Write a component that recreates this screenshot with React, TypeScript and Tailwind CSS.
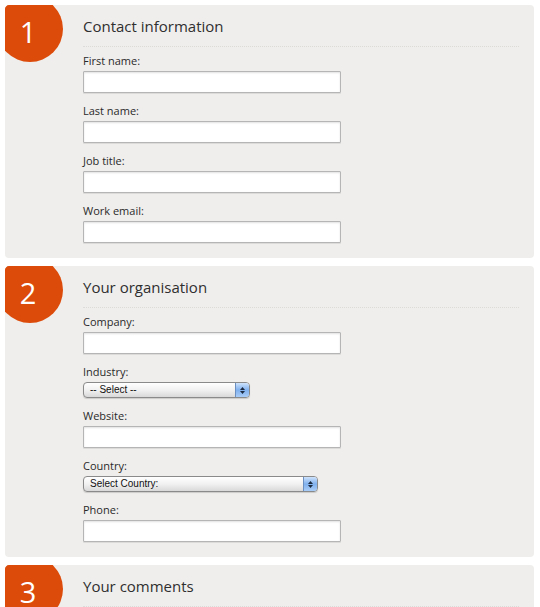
import React from 'react'

type Field = { label: string; kind?: 'text' | 'select'; placeholder?: string; width?: string }

const sections: { n: number; title: string; fields: Field[] }[] = [
    {
        n: 1,
        title: 'Contact information',
        fields: [
            { label: 'First name:' },
            { label: 'Last name:' },
            { label: 'Job title:' },
            { label: 'Work email:' },
        ],
    },
    {
        n: 2,
        title: 'Your organisation',
        fields: [
            { label: 'Company:' },
            { label: 'Industry:', kind: 'select', placeholder: '-- Select --', width: 'w-[167px]' },
            { label: 'Website:' },
            { label: 'Country:', kind: 'select', placeholder: 'Select Country:', width: 'w-[235px]' },
            { label: 'Phone:' },
        ],
    },
    { n: 3, title: 'Your comments', fields: [] },
]

function AquaSelect({ text, width }: { text: string; width?: string }) {
    return (
        <div className={`${width} h-[16px] flex rounded-[4px] border border-[#8a8a8a] overflow-hidden bg-gradient-to-b from-white via-[#f1f1f1] to-[#d9d9d9] shadow-[0_1px_1px_rgba(0,0,0,0.15)]`}>
            <div className="flex-1 pl-[6px] text-[10px] leading-[14px] text-[#111] font-['Liberation_Sans',sans-serif]">
                {text}
            </div>
            <div className="w-[14px] border-l border-[#6c8fc2] bg-gradient-to-b from-[#cfe3fb] via-[#7fb0ee] to-[#a9cdf7] flex flex-col items-center justify-center gap-[1px]">
                <svg width="5" height="3" viewBox="0 0 5 3"><path d="M2.5 0L5 3H0z" fill="#1b2a40" /></svg>
                <svg width="5" height="3" viewBox="0 0 5 3"><path d="M0 0h5L2.5 3z" fill="#1b2a40" /></svg>
            </div>
        </div>
    )
}

function Section({ n, title, fields }: { n: number; title: string; fields: Field[] }) {
    return (
        <div className="shrink-0 flex rounded-[4px] bg-[#efeeec] overflow-hidden pb-[15px]">
            <div className="w-[78px] shrink-0">
                <div className="-ml-[8px] -mt-[9px] w-[66px] h-[66px] rounded-full bg-[#dd4b0a] flex items-center justify-center pt-[4px] pr-[4px] text-white text-[29px] leading-none">
                    {n}
                </div>
            </div>
            <div className="flex-1 pr-[15px] pt-[10px]">
                <h2 className="text-[15px] leading-[22px] text-[#2f2f2f] pb-[9px] border-b border-dotted border-[#dcdbd8]">
                    {title}
                </h2>
                <div className="flex flex-col gap-[10px] mt-[6px]">
                    {fields.map((f) => (
                        <div key={f.label} className="flex flex-col gap-[3px]">
                            <label className="text-[11px] leading-[15px] text-[#2a2a2a]">{f.label}</label>
                            {f.kind === 'select' ? (
                                <AquaSelect text={f.placeholder ?? ''} width={f.width} />
                            ) : (
                                <input className="w-[258px] h-[22px] bg-white border border-[#b5b5b5] rounded-[1px] shadow-[inset_0_1px_2px_rgba(0,0,0,0.12),0_1px_0_rgba(0,0,0,0.08)]" />
                            )}
                        </div>
                    ))}
                </div>
            </div>
        </div>
    )
}

export default function App() {
    return (
        <div className="w-[540px] h-[607px] overflow-hidden bg-white p-[5px] pr-[6px] flex flex-col gap-[8px] font-['Open_Sans',sans-serif]">
            {sections.map((s) => (
                <Section key={s.n} {...s} />
            ))}
        </div>
    )
}
